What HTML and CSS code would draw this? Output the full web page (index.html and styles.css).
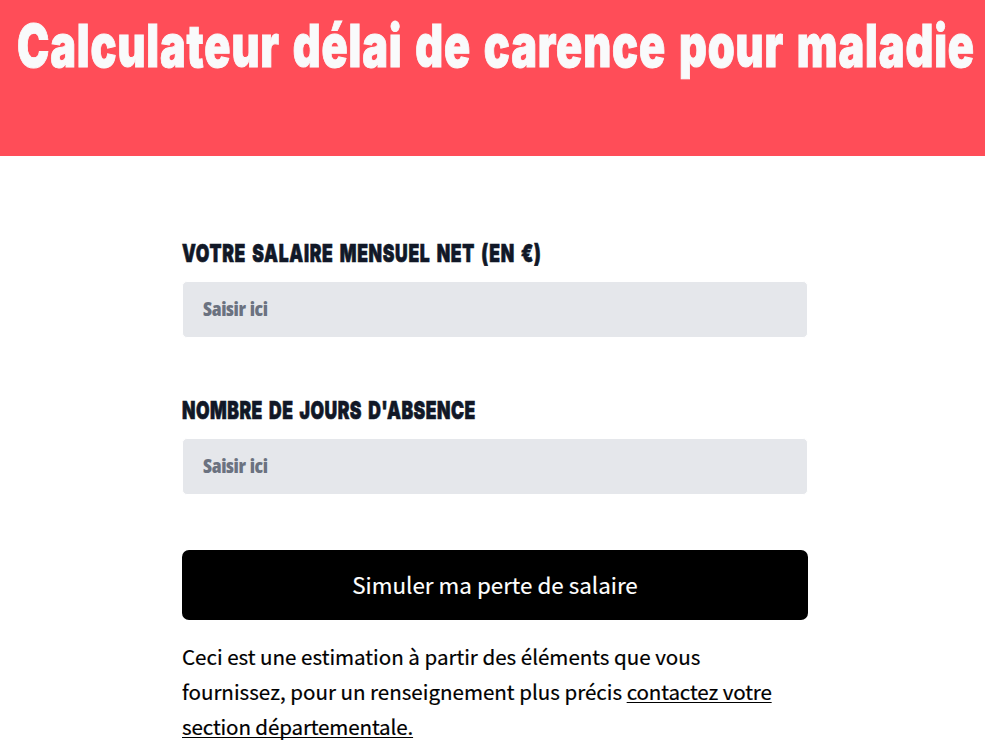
FILE: index.html
```html
<!DOCTYPE html>
<html lang="fr">
<head>
<meta charset="utf-8">
<title>Calculateur délai de carence pour maladie</title>
<link rel="stylesheet" href="styles.css">
</head>
<body>
<header class="hero">
  <h1 class="hero-title">Calculateur délai de carence pour maladie</h1>
</header>
<main class="form">
  <label class="label" for="salary"><span class="label-text label-salary">Votre salaire mensuel net (en €)</span></label>
  <input class="field" id="salary" type="text" placeholder="Saisir ici">
  <label class="label" for="days"><span class="label-text label-days">Nombre de jours d'absence</span></label>
  <input class="field" id="days" type="text" placeholder="Saisir ici">
  <button class="submit" type="button">Simuler ma perte de salaire</button>
  <p class="note">Ceci est une estimation à partir des éléments que vous fournissez, pour un renseignement plus précis <a class="link" href="#">contactez votre section départementale.</a></p>
</main>
</body>
</html>
```
FILE: styles.css
```css
* { box-sizing: border-box; }
body {
  margin: 0;
  background: #fff;
  color: #000;
  font-family: "Noto Sans CJK JP", "Noto Sans", sans-serif;
  overflow: hidden;
}
.hero {
  height: 156px;
  background: #ff4d58;
  padding: 16px 0 0 17px;
  overflow: hidden;
}
.hero-title {
  margin: 0;
  width: max-content;
  font: 900 59px/60px Inter, sans-serif;
  letter-spacing: 1.2px;
  word-spacing: 4.5px;
  color: #f9fafb;
  -webkit-text-stroke: 1px #f9fafb;
  transform: scaleX(.732);
  transform-origin: left;
}
.form {
  width: 626px;
  margin: 81px 0 0 182px;
  display: flex;
  flex-direction: column;
}
.label {
  height: 32px;
  margin-bottom: 12px;
  color: #111827;
  font: 900 25px/32px Inter, sans-serif;
  text-transform: uppercase;
  white-space: nowrap;
}
.label-text {
  display: inline-block;
  -webkit-text-stroke: .7px #111827;
  transform: scaleX(.7);
  transform-origin: left;
}
.label-salary {
  letter-spacing: 1px;
  word-spacing: 2.9px;
}
.label-days {
  letter-spacing: .7px;
  word-spacing: 3.2px;
}
.field {
  height: 57px;
  margin-bottom: 56px;
  padding: 0 20px 2px;
  border: 1px solid #fff;
  border-radius: 5px;
  background: #e5e7eb;
  font: 800 20px/24px "Open Sans", sans-serif;
  font-stretch: 75%;
  letter-spacing: -.4px;
  word-spacing: 1px;
}
.field::placeholder { color: #6b7280; opacity: 1; }
.submit {
  height: 70px;
  margin: -1px 0 0;
  padding: 0 0 3px;
  border: 0;
  border-radius: 7px;
  background: #000;
  color: #fff;
  font: 400 22.4px/36px "Noto Sans CJK JP", sans-serif;
  -webkit-text-stroke: .15px #fff;
}
.note {
  margin: 19px 0 0;
  font-size: 20.55px;
  line-height: 35px;
  -webkit-text-stroke: .2px #000;
}
.link {
  color: inherit;
  letter-spacing: -.12px;
  text-decoration: underline;
  text-decoration-skip-ink: none;
  text-decoration-thickness: 1px;
  text-underline-offset: 2px;
}
```
